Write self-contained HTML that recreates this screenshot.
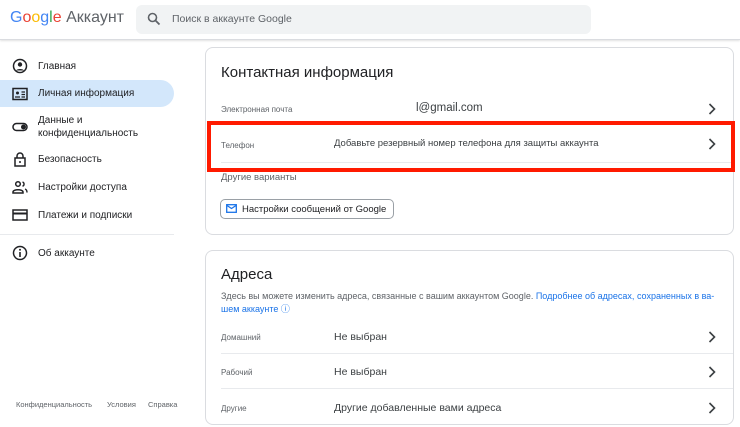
<!DOCTYPE html><html><head><meta charset="utf-8"><style>
*{margin:0;padding:0;box-sizing:border-box}
body{width:740px;height:427px;overflow:hidden;background:#fff;font-family:"Liberation Sans",Arial,sans-serif;color:#202124;position:relative}
.a{position:absolute;white-space:nowrap}
.nav{font-size:10px;color:#202124}
.ico{position:absolute;left:12px;width:16px;height:16px}
.card{position:absolute;left:205px;width:529px;border:1px solid #dadce0;border-radius:8px;background:#fff}
.lbl{font-size:8px;color:#5f6368}
.val{font-size:10px;color:#3c4043}
.hr{position:absolute;left:15px;right:0;height:1px;background:#e8eaed}
.chev{position:absolute;width:8px;height:12px}
</style></head><body>
<div class="a" style="left:0;top:0;width:740px;height:40px;border-bottom:1px solid #dadce0;box-shadow:0 1px 2px rgba(0,0,0,.12)"></div>
<div class="a" style="left:10px;top:9px;font-size:16px"><span style="color:#4285f4">G</span><span style="color:#ea4335">o</span><span style="color:#fbbc05">o</span><span style="color:#4285f4">g</span><span style="color:#34a853">l</span><span style="color:#ea4335">e</span> <span style="color:#5f6368">Аккаунт</span></div>
<div class="a" style="left:136px;top:5px;width:455px;height:29px;background:#f1f3f4;border-radius:6px"></div>
<svg class="a" style="left:147px;top:12px" width="14" height="14" viewBox="0 0 14 14"><circle cx="5.5" cy="5.5" r="4" fill="none" stroke="#5f6368" stroke-width="1.6"/><path d="M8.5 8.5L12.5 12.5" stroke="#5f6368" stroke-width="1.8"/></svg>
<div class="a" style="left:172px;top:13px;font-size:10.5px;color:#5f6368">Поиск в аккаунте Google</div>

<div class="a" style="left:0;top:80px;width:174px;height:27px;background:#d3e7fb;border-radius:0 14px 14px 0"></div>
<svg class="ico" style="top:58px" viewBox="0 0 16 16"><circle cx="8" cy="8" r="6.5" fill="none" stroke="#202124" stroke-width="1.5"/><circle cx="8" cy="6.5" r="2.2" fill="#202124"/><path d="M4 12.5c1-2 7-2 8 0" fill="#202124"/></svg>
<div class="a nav" style="left:38px;top:61px">Главная</div>
<svg class="ico" style="top:86px" viewBox="0 0 16 16"><rect x="1" y="2.5" width="14" height="11" fill="none" stroke="#202124" stroke-width="1.5"/><circle cx="5.5" cy="7" r="1.5" fill="#202124"/><path d="M3 11h5M9.5 6h3.5M9.5 8.5h3.5M9.5 11h3.5" stroke="#202124" stroke-width="1.2"/></svg>
<div class="a nav" style="left:38px;top:88px">Личная информация</div>
<svg class="ico" style="top:119px" viewBox="0 0 16 16"><rect x="1" y="4.5" width="14" height="7" rx="3.5" fill="none" stroke="#202124" stroke-width="1.5"/><circle cx="11.5" cy="8" r="2.5" fill="#202124"/></svg>
<div class="a nav" style="left:38px;top:114px;line-height:13px">Данные и<br>конфиденциальность</div>
<svg class="ico" style="top:151px" viewBox="0 0 16 16"><rect x="3" y="7" width="10" height="8" fill="none" stroke="#202124" stroke-width="1.5"/><path d="M5 7V5a3 3 0 016 0v2" fill="none" stroke="#202124" stroke-width="1.5"/><circle cx="8" cy="11" r="1" fill="#202124"/></svg>
<div class="a nav" style="left:38px;top:154px">Безопасность</div>
<svg class="ico" style="top:179px" viewBox="0 0 16 16"><circle cx="6" cy="5" r="2.3" fill="none" stroke="#202124" stroke-width="1.5"/><path d="M1 13c0-3 10-3 10 0v1H1z" fill="none" stroke="#202124" stroke-width="1.5"/><path d="M10.5 3a2.2 2.2 0 010 4.2M13 10c1.5.5 2 1.5 2 3.5" fill="none" stroke="#202124" stroke-width="1.4"/></svg>
<div class="a nav" style="left:38px;top:182px">Настройки доступа</div>
<svg class="ico" style="top:207px" viewBox="0 0 16 16"><rect x="1" y="3" width="14" height="10" fill="none" stroke="#202124" stroke-width="1.5"/><rect x="1" y="5.5" width="14" height="2" fill="#202124"/></svg>
<div class="a nav" style="left:38px;top:210px">Платежи и подписки</div>
<div class="a" style="left:0;top:234px;width:174px;height:1px;background:#e8eaed"></div>
<svg class="ico" style="top:245px" viewBox="0 0 16 16"><circle cx="8" cy="8" r="6.5" fill="none" stroke="#202124" stroke-width="1.5"/><path d="M8 7v5" stroke="#202124" stroke-width="1.6"/><circle cx="8" cy="4.8" r="1" fill="#202124"/></svg>
<div class="a nav" style="left:38px;top:248px">Об аккаунте</div>
<div class="a" style="left:16px;top:400px;font-size:7.5px;color:#5f6368">Конфиденциальность</div>
<div class="a" style="left:107px;top:400px;font-size:7.5px;color:#5f6368">Условия</div>
<div class="a" style="left:148px;top:400px;font-size:7.5px;color:#5f6368">Справка</div>

<div class="card" style="top:47px;height:188px">
<div class="a" style="left:15px;top:16px;font-size:15px;color:#202124">Контактная информация</div>
<div class="a lbl" style="left:15px;top:57px">Электронная почта</div>
<div class="a" style="left:210px;top:54px;font-size:11.5px;color:#3c4043">l@gmail.com</div>
<svg class="chev" style="left:502px;top:55px" viewBox="0 0 8 12"><path d="M1.5 1l5 5-5 5" fill="none" stroke="#3c4043" stroke-width="1.6"/></svg>
<div class="a lbl" style="left:15px;top:93px">Телефон</div>
<div class="a" style="left:128px;top:90px;font-size:9.5px;color:#3c4043">Добавьте резервный номер телефона для защиты аккаунта</div>
<svg class="chev" style="left:502px;top:90px" viewBox="0 0 8 12"><path d="M1.5 1l5 5-5 5" fill="none" stroke="#3c4043" stroke-width="1.6"/></svg>
<div class="hr" style="top:114px"></div>
<div class="a" style="left:15px;top:124px;font-size:9.5px;color:#5f6368">Другие варианты</div>
<div class="a" style="left:14px;top:151px;width:174px;height:20px;border:1px solid #9aa0a6;border-radius:5px"></div>
<svg class="a" style="left:20px;top:156px" width="11" height="9" viewBox="0 0 11 9"><rect x=".7" y=".7" width="9.6" height="7.6" fill="none" stroke="#1a73e8" stroke-width="1.3"/><path d="M1 1.5l4.5 3 4.5-3" fill="none" stroke="#1a73e8" stroke-width="1.2"/></svg>
<div class="a" style="left:36px;top:156px;font-size:9.5px;color:#202124">Настройки сообщений от Google</div>
</div>
<div class="a" style="left:207px;top:121px;width:528px;height:51px;border:4px solid #ff1a00"></div>

<div class="card" style="top:250px;height:175px">
<div class="a" style="left:15px;top:15px;font-size:15px">Адреса</div>
<div class="a" style="left:15px;top:39px;font-size:9px;color:#5f6368;line-height:13px">Здесь вы можете изменить адреса, связанные с вашим аккаунтом Google. <span style="color:#1a73e8">Подробнее об адресах, сохраненных в ва-</span><br><span style="color:#1a73e8">шем аккаунте ⓘ</span></div>
<div class="a lbl" style="left:15px;top:82px">Домашний</div>
<div class="a val" style="left:128px;top:80px;font-size:10.5px">Не выбран</div>
<svg class="chev" style="left:502px;top:80px" viewBox="0 0 8 12"><path d="M1.5 1l5 5-5 5" fill="none" stroke="#3c4043" stroke-width="1.6"/></svg>
<div class="hr" style="top:102px"></div>
<div class="a lbl" style="left:15px;top:117px">Рабочий</div>
<div class="a val" style="left:128px;top:115px;font-size:10.5px">Не выбран</div>
<svg class="chev" style="left:502px;top:115px" viewBox="0 0 8 12"><path d="M1.5 1l5 5-5 5" fill="none" stroke="#3c4043" stroke-width="1.6"/></svg>
<div class="hr" style="top:137px"></div>
<div class="a lbl" style="left:15px;top:153px">Другие</div>
<div class="a val" style="left:128px;top:151px;font-size:10.5px">Другие добавленные вами адреса</div>
<svg class="chev" style="left:502px;top:151px" viewBox="0 0 8 12"><path d="M1.5 1l5 5-5 5" fill="none" stroke="#3c4043" stroke-width="1.6"/></svg>
</div>
</body></html>
